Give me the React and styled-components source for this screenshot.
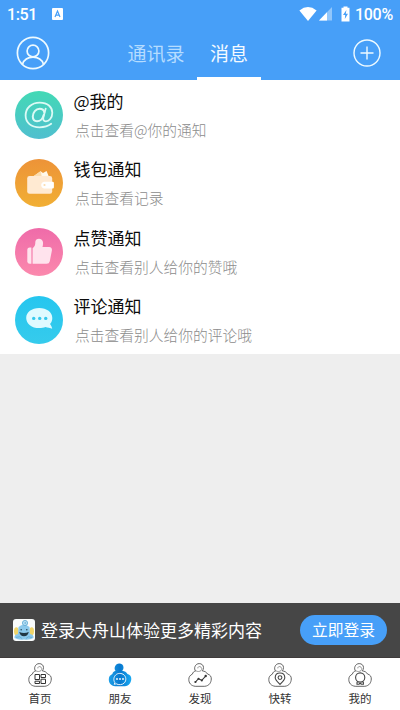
import React from 'react';
import styled, { createGlobalStyle } from 'styled-components';

const GlobalStyle = createGlobalStyle`
  * {
    box-sizing: border-box;
  }

  body {
    margin: 0;
    background-color: #eeeeee;
    font-family: "Noto Sans CJK SC", "Noto Sans", sans-serif;
  }
`;

const Screen = styled.div`
  width: 400px;
  height: 710px;
  display: flex;
  flex-direction: column;
  overflow: hidden;
  background-color: #eeeeee;
`;

const Header = styled.header`
  height: 80px;
  flex: none;
  background-color: #479ff8;
  color: #ffffff;
`;

const StatusBar = styled.div`
  height: 28px;
  padding: 0 7px;
  display: flex;
  align-items: center;
  font-family: Roboto, sans-serif;
  font-size: 16px;
  font-weight: 500;

  svg {
    flex: none;
  }
`;

const Clock = styled.span`
  width: 45px;
  letter-spacing: -0.4px;
`;

const StatusIcons = styled.div`
  margin-left: auto;
  display: flex;
  align-items: center;
`;

const Battery = styled.span`
  width: 38px;
  margin-left: 4px;
  letter-spacing: -0.3px;
`;

const NavBar = styled.div`
  height: 52px;
  padding: 0 19px 0 16px;
  display: flex;
`;

const NavButton = styled.div`
  height: 50px;
  display: flex;
  align-items: center;
`;

const Tabs = styled.div`
  flex: 1;
  margin-left: 65px;
  display: flex;
`;

const Tab = styled.div`
  width: ${props => props.$width}px;
  height: 52px;
  border-bottom: ${props => (props.$active ? '3px solid #ffffff' : 'none')};
  text-align: center;
  font-size: 19px;
  line-height: 50px;
  color: ${props => (props.$active ? '#f4faff' : '#b5dcff')};
`;

const List = styled.div`
  height: 274px;
  flex: none;
  display: grid;
  grid-template-rows: repeat(4, 1fr);
  background-color: #ffffff;
`;

const Row = styled.div`
  padding: 10.5px 0 0 14.5px;
  display: flex;
  gap: 11px;
`;

const Avatar = styled.div`
  width: 48px;
  height: 48px;
  flex: none;
  border-radius: 50%;
  background: linear-gradient(${props => props.$from}, ${props => props.$to});
`;

const RowText = styled.div`
  flex: 1;
  height: 58px;
  margin-top: -2px;
`;

const RowTitle = styled.div`
  font-size: 17px;
  line-height: 23px;
  color: #0c0c0c;
`;

const RowDetail = styled.div`
  padding: 6px 0 0 1.5px;
  font-size: 14.75px;
  font-weight: 300;
  line-height: 24px;
  color: #8c8c8c;
`;

const Blank = styled.div`
  flex: 1;
`;

const LoginBar = styled.div`
  height: 55px;
  flex: none;
  padding: 0 13px;
  display: flex;
  align-items: center;
  background-color: #464646;
  border-bottom: 1px solid #3f3b3b;
  color: #ffffff;
`;

const LoginText = styled.div`
  flex: 1;
  margin-left: 6px;
  font-size: 17px;
  line-height: 24px;
`;

const LoginButton = styled.button`
  width: 87px;
  height: 30px;
  padding: 0;
  border: none;
  border-radius: 15px;
  background-color: #479ff8;
  color: #ffffff;
  font-family: inherit;
  font-size: 15.8px;
  line-height: 30px;
`;

const BottomNav = styled.nav`
  height: 52px;
  flex: none;
  display: grid;
  grid-template-columns: repeat(5, 1fr);
  background-color: #ffffff;
`;

const NavItem = styled.div`
  padding-top: 4px;
  display: flex;
  flex-direction: column;
  align-items: center;
  font-size: 11.5px;
  line-height: 17px;
  color: #333333;
`;

const UserIcon = () => (
  <svg width="34" height="34" viewBox="0 0 34 34" fill="none" stroke="#eefaff" strokeWidth="1.7">
    <circle cx="17" cy="17" r="15.6" />
    <circle cx="17" cy="15" r="5.9" />
    <path d="M6.5 28.3C8 23.8 12 21.2 17 21.2S26 23.8 27.5 28.3" />
  </svg>
);

const PlusIcon = () => (
  <svg width="28" height="28" viewBox="0 0 28 28" fill="none" stroke="#eefaff" strokeWidth="1.4">
    <circle cx="14" cy="14" r="13" />
    <path d="M14 7.5v13M7.5 14h13" />
  </svg>
);

const KeyboardIcon = () => (
  <svg width="11" height="12" viewBox="0 0 11 12">
    <rect width="11" height="12" rx="1" fill="#ffffff" />
    <path d="M3 9L5.5 3L8 9M3.9 7.2h3.2" fill="none" stroke="#479ff8" strokeWidth="1.2" />
  </svg>
);

const SignalIcons = () => (
  <svg width="52" height="16" viewBox="0 0 52 16">
    <path d="M.4 4.4Q9 -2.2 17.6 4.4L9 15z" fill="#ffffff" />
    <path d="M33 1v13.5H20z" fill="#91c6fb" />
    <path d="M28 6.2v8.3h-8z" fill="#ffffff" />
    <path d="M44.5.5h4v1.3h2v13.7h-8V1.8h2z" fill="#ffffff" />
    <path d="M47.4 4L44 9h2.2l-.4 4 3.2-5.2h-2.2z" fill="#479ff8" />
  </svg>
);

const AtIcon = () => (
  <svg width="48" height="48" viewBox="0 0 48 48" fill="none" stroke="#dcfaf5" strokeLinecap="round">
    <path d="M36.2 32.8C33.2 35.2 29 36.3 24.5 36.3C16.2 36.3 10.6 31.6 10.6 24.6C10.6 17 16.5 11.6 24.8 11.6C32.6 11.6 37.3 16 37.3 21.7C37.3 27 33.9 30.3 30.9 30.3C28.4 30.3 27.8 28.4 28.5 25.8L30.7 17.6" strokeWidth="1.8" />
    <path d="M29.3 21.2C28.8 18.9 27.2 17.7 24.7 17.7C20.8 17.7 17.8 21.4 17.8 25.6C17.8 28.6 19.5 30.3 22 30.3C25.2 30.3 27.9 27.6 28.7 24" strokeWidth="2" />
  </svg>
);

const WalletIcon = () => (
  <svg width="48" height="48" viewBox="0 0 48 48">
    <path d="M17.5 18L25.6 12.2L28 14.1L31.6 12L34 18z" fill="#fff8ea" />
    <path d="M18 17.5L25.8 12L26.7 17.5z" fill="#fbdcae" />
    <rect x="12.2" y="17" width="25" height="17.8" rx="2.4" fill="#ffead2" />
    <path d="M29 22.7h8.7q1.2 0 1.2 1.2v4.3q0 1.2-1.2 1.2H29q-2.8-.5-2.8-3.3t2.8-3.4z" fill="#ffffff" />
    <circle cx="29.5" cy="26" r="1.1" fill="#fbdcae" />
  </svg>
);

const LikeIcon = () => (
  <svg width="48" height="48" viewBox="0 0 48 48" fill="#ffe3ed">
    <path d="M14.7 19.5h1.7v16.2h-1.7q-2.2 0-2.4-2.2V21.8q.1-2.2 2.4-2.3z" />
    <path d="M17.6 20.3C19.8 18 20.4 16.8 20.3 14.1C20.3 9.8 26.9 9.4 27.9 13.7C28.2 15.6 28 17.4 27.5 19.1H34.1Q37.3 19.5 36.9 22.4L34.8 33.2Q34.2 35.7 31.7 35.7H17.6z" />
  </svg>
);

const CommentIcon = () => (
  <svg width="48" height="48" viewBox="0 0 48 48">
    <path d="M24.2 12C16.7 12 11.2 16.2 11.2 21.9S16.7 32.1 24.2 32.1C26.6 32.1 28.7 31.8 30.5 31C32.3 31.5 35.5 32 37.2 32.8C37 31 36 29.2 35 27.9C36.6 26.2 37.3 24.2 37.3 21.9C37.3 16.2 31.8 12 24.2 12z" fill="#dffaff" />
    <g fill="#36c8ed">
      <circle cx="18.7" cy="22.4" r="1.7" />
      <circle cx="24.7" cy="22.4" r="1.7" />
      <circle cx="30.7" cy="22.4" r="1.7" />
    </g>
  </svg>
);

const MascotLogo = () => (
  <svg width="22" height="22" viewBox="0 0 22 22">
    <rect width="22" height="22" rx="3" fill="#f9fcfc" />
    <ellipse cx="3.3" cy="12.2" rx="2.3" ry="4" fill="#efd56a" />
    <ellipse cx="18.7" cy="12.2" rx="2.3" ry="4" fill="#efd56a" />
    <path d="M5.5 8Q11 3.5 16.5 8L17 15Q21 15.6 20.5 19Q16 21.5 11 20.5Q6 21.5 1.5 19Q1 15.6 5 15z" fill="#8bc9ec" />
    <circle cx="12" cy="4" r="2.6" fill="#b5def4" stroke="#5aa7d0" strokeWidth=".8" />
    <circle cx="12.2" cy="4" r=".8" fill="#5aa7d0" />
    <circle cx="8.2" cy="10.7" r=".8" fill="#25485c" />
    <circle cx="13.8" cy="10.7" r=".8" fill="#25485c" />
    <path d="M6.2 13Q11 15 15.8 13Q14.8 17.2 11 17.2T6.2 13z" fill="#203744" />
    <path d="M3 18.5Q7 16.5 9 19.5M19 18.5Q15 16.5 13 19.5" fill="none" stroke="#5aa7d0" strokeWidth=".7" />
  </svg>
);

/**
 * Gourd shaped outline shared by all bottom tabs
 * @param {boolean} active
 * @param {node} children
 */
const Gourd = ({ active, children }) => (
  <svg width="26" height="28" viewBox="0 0 26 28" fill="none" stroke="#555555" strokeWidth=".9">
    {active && (
      <defs>
        <linearGradient id="gourd" x1="0" x2="1" y1="0" y2="0">
          <stop offset="0" stopColor="#1da0e9" />
          <stop offset=".5" stopColor="#0878ce" />
          <stop offset="1" stopColor="#19aaf3" />
        </linearGradient>
      </defs>
    )}
    <path
      d="M8.6 9.1C7.6 7.8 7.3 6 8 4.5C8.8 2.6 10.3 1.6 12.2 1.6C14.7 1.6 16.5 3.2 16.5 5.6C16.5 7.1 15.9 8.1 15.2 8.8C17.8 9.2 19.4 10 20.5 12C23.1 12.7 24.4 14.5 24.3 17C24.1 20.6 22.3 23.8 17.8 24.3H8.2C3.8 23.8 1.8 20.8 1.8 17.5C1.8 14.8 3.1 13.2 5.4 12.1C5.8 10.4 6.8 9.4 8.6 9.1z"
      fill={active ? 'url(#gourd)' : '#ffffff'}
      stroke={active ? 'none' : '#555555'}
    />
    {!active && <path d="M9 8.8C10.2 9.8 12.8 9.7 14 8.6C15.3 7.3 14.8 5 13 4.6C11.8 4.3 10.5 5.2 10.8 6.4" stroke="#777777" strokeWidth=".7" />}
    {children}
  </svg>
);

const HomeGlyph = () => (
  <g stroke="#333333" strokeWidth="1">
    <path d="M8 12.5h4.5v5H8zM14 12.5h4.5v3H14zM8 19.2h4.5v2.3H8zM14 17.2h4.5v4.3H14z" />
  </g>
);

const FriendsGlyph = () => (
  <g>
    <path d="M7.9 20.7L7.2 22.3L9.2 21.8C11.5 23.2 15.5 23 17.4 20.8C19.5 18.6 19.2 14.8 17 12.9C14.7 10.9 10.8 10.9 8.8 12.9C6.6 15 6.2 18.1 7.9 20.7z" stroke="#ffffff" strokeWidth=".9" />
    <g fill="#ffffff" stroke="none">
      <circle cx="10" cy="17" r=".9" />
      <circle cx="13" cy="17" r=".9" />
      <circle cx="16" cy="17" r=".9" />
    </g>
  </g>
);

const DiscoverGlyph = () => (
  <g stroke="#333333">
    <path d="M8.5 20L11.5 16.7L14.8 18.4L18.7 14" strokeWidth="1.1" />
    <g fill="#333333" stroke="none">
      <circle cx="8.4" cy="20" r="1.1" />
      <circle cx="11.5" cy="16.7" r="1" />
      <circle cx="14.8" cy="18.4" r="1" />
      <circle cx="18.7" cy="14" r="1.2" />
    </g>
  </g>
);

const TransferGlyph = () => (
  <g stroke="#444444" strokeWidth="1.1">
    <path d="M13 22.5C10.5 19.8 8.2 17.8 8.2 15.7C8.2 12.7 10.2 11 13 11S17.8 12.7 17.8 15.7C17.8 17.8 15.5 19.8 13 22.5z" />
    <circle cx="13" cy="15.6" r="1.9" />
  </g>
);

const MineGlyph = () => (
  <g stroke="#444444" strokeWidth="1.1">
    <circle cx="13.2" cy="15.5" r="4.6" />
    <path d="M11 19.6L10 20.4V22.2H12L12.6 21.6H13.8L14.4 22.2H16.4V20.4L15.4 19.6" />
  </g>
);

const notices = [
  { title: '@我的', detail: '点击查看@你的通知', from: '#43d9b5', to: '#50bfcf', Icon: AtIcon },
  { title: '钱包通知', detail: '点击查看记录', from: '#ed9338', to: '#f1af34', Icon: WalletIcon },
  { title: '点赞通知', detail: '点击查看别人给你的赞哦', from: '#ef6ba9', to: '#fb89ad', Icon: LikeIcon },
  { title: '评论通知', detail: '点击查看别人给你的评论哦', from: '#25c6ef', to: '#36cbec', Icon: CommentIcon }
];

const navItems = [
  { label: '首页', Glyph: HomeGlyph },
  { label: '朋友', Glyph: FriendsGlyph, active: true },
  { label: '发现', Glyph: DiscoverGlyph },
  { label: '快转', Glyph: TransferGlyph },
  { label: '我的', Glyph: MineGlyph }
];

const App = () => (
  <Screen>
    <GlobalStyle />

    <Header>
      <StatusBar>
        <Clock>1:51</Clock>
        <KeyboardIcon />
        <StatusIcons>
          <SignalIcons />
          <Battery>100%</Battery>
        </StatusIcons>
      </StatusBar>
      <NavBar>
        <NavButton><UserIcon /></NavButton>
        <Tabs>
          <Tab $width={82}>通讯录</Tab>
          <Tab $width={64} $active>消息</Tab>
        </Tabs>
        <NavButton><PlusIcon /></NavButton>
      </NavBar>
    </Header>

    <List>
      {notices.map(({ title, detail, from, to, Icon }) => (
        <Row key={title}>
          <Avatar $from={from} $to={to}><Icon /></Avatar>
          <RowText>
            <RowTitle>{title}</RowTitle>
            <RowDetail>{detail}</RowDetail>
          </RowText>
        </Row>
      ))}
    </List>

    <Blank />

    <LoginBar>
      <MascotLogo />
      <LoginText>登录大舟山体验更多精彩内容</LoginText>
      <LoginButton>立即登录</LoginButton>
    </LoginBar>

    <BottomNav>
      {navItems.map(({ label, Glyph, active }) => (
        <NavItem key={label}>
          <Gourd active={active}><Glyph /></Gourd>
          {label}
        </NavItem>
      ))}
    </BottomNav>
  </Screen>
);

export default App;
